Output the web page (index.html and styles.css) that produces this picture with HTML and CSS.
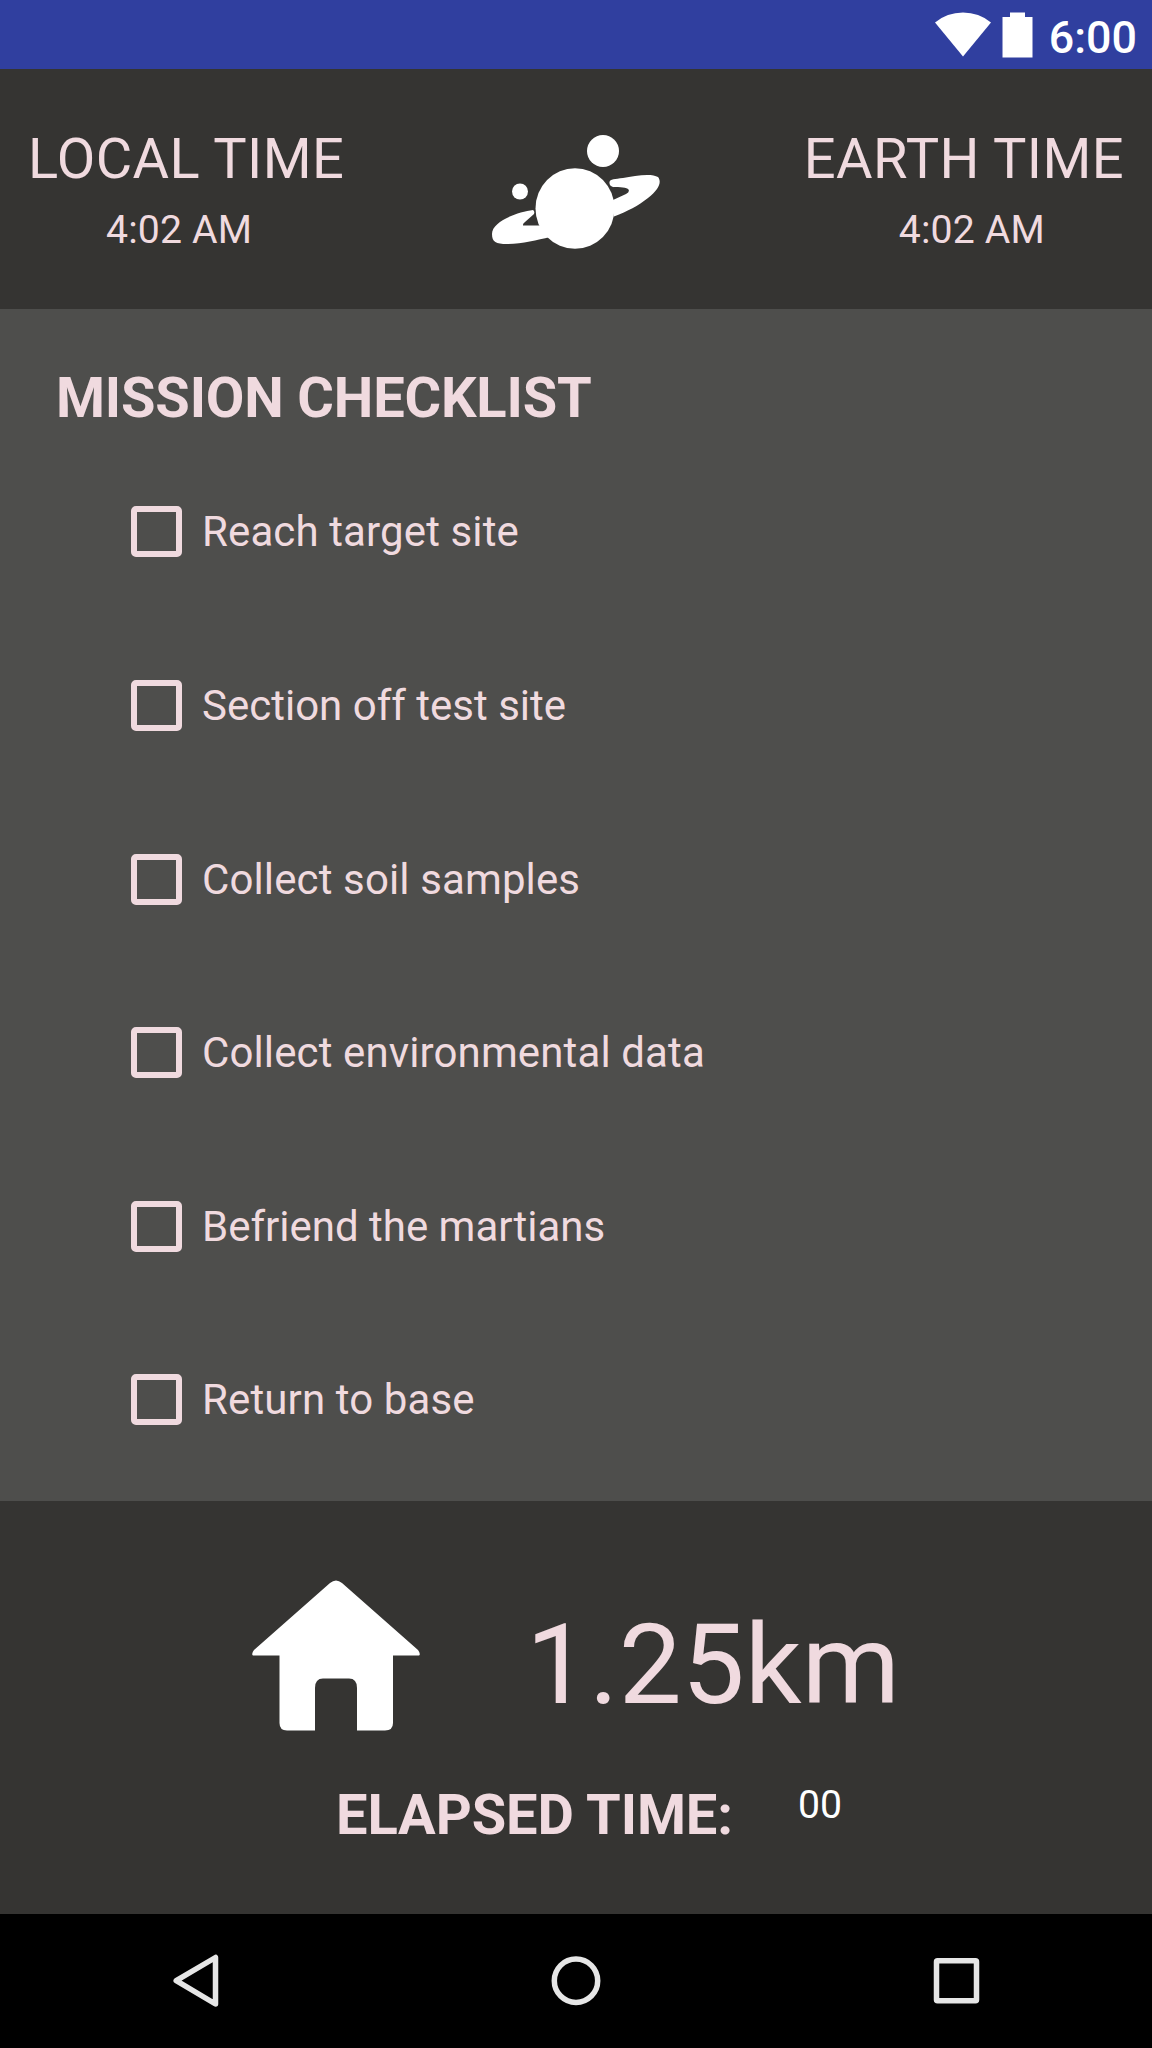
FILE: index.html
```html
<!DOCTYPE html>
<html lang="en">
<head>
<meta charset="utf-8">
<title>Mission Checklist</title>
<link rel="stylesheet" href="styles.css">
</head>
<body>
<div class="screen">
  <div class="status-bar">
    <svg class="wifi" width="56" height="45" viewBox="0 0 56 45"><path d="M0 10.5Q12 .5 28 .5T56 10.5L28 44.5Z" fill="#fff"/></svg>
    <svg class="battery" width="31" height="46" viewBox="0 0 31 46"><path d="M8 .5H23V5H30.5V45.5H.5V5H8Z" fill="#fff"/></svg>
    <span class="clock">6:00</span>
  </div>
  <header class="header">
    <div class="time local">
      <div class="time-label">LOCAL TIME</div>
      <div class="time-value">4:02 AM</div>
    </div>
    <svg class="planet" width="168" height="120" viewBox="0 0 168 120" fill="#fff">
      <circle cx="111" cy="19" r="16"/>
      <circle cx="28" cy="59.5" r="8"/>
      <ellipse cx="83" cy="76.500" rx="39.500" ry="40.300"/>
      <path d="M41 78C26 80 0 89 0 102C0 110 4 112 15 112C30 112 45 108 58 105L50 93.500L31 93.500Q30.500 92 33 90L42 82Q43 79 41 78Z"/>
      <path d="M117.500 50C118 47 123 47 131 46C143 43.500 160 41 166 45C170 50 167 57 156 66C146 74 136 79 122 84.500L121 68L134 62Q138 60 136.500 57.500C135 55 128 55.500 121 55Q117 54 117.500 50Z"/>
    </svg>
    <div class="time earth">
      <div class="time-label">EARTH TIME</div>
      <div class="time-value">4:02 AM</div>
    </div>
  </header>
  <main class="checklist">
    <h1 class="heading">MISSION CHECKLIST</h1>
    <ul class="items">
      <li class="item"><span class="box"></span>Reach target site</li>
      <li class="item ligatures"><span class="box"></span>Section off test site</li>
      <li class="item"><span class="box"></span>Collect soil samples</li>
      <li class="item"><span class="box"></span>Collect environmental data</li>
      <li class="item ligatures"><span class="box"></span>Befriend the martians</li>
      <li class="item"><span class="box"></span>Return to base</li>
    </ul>
  </main>
  <footer class="summary">
    <div class="distance-row">
      <svg class="house" width="168" height="168" viewBox="0 0 168 168"><path d="M78 12Q84 7 90 12L166 79Q169 83 167 84.500H141V152Q141 159.500 133 159.500H105V117Q105 107.500 97 107.500H71Q63 107.500 63 117V159.500H35Q27.500 159.500 27.500 152V84.500H1Q-1 83 2 79Z" fill="#fff"/></svg>
      <span class="distance">1.25km</span>
    </div>
    <div class="elapsed-row">
      <span class="heading">ELAPSED TIME:</span>
      <span class="elapsed">00</span>
    </div>
  </footer>
  <nav class="nav-bar">
    <svg width="60" height="60" viewBox="0 0 60 60"><path d="M50.500 6.500V53L11.200 29.700Z"/></svg>
    <svg width="60" height="60" viewBox="0 0 60 60"><circle cx="30" cy="29.700" r="21.700"/></svg>
    <svg width="60" height="60" viewBox="0 0 60 60"><rect x="9.500" y="9.700" width="40" height="40" rx="1"/></svg>
  </nav>
</div>
</body>
</html>
```
FILE: styles.css
```css
* {
  box-sizing: border-box;
}

body {
  margin: 0;
  background: #000;
}

.screen {
  display: flex;
  flex-direction: column;
  width: 1152px;
  height: 2048px;
  font-family: Roboto, sans-serif;
  color: #f0dadf;
  overflow: hidden;
}

.status-bar {
  display: flex;
  justify-content: flex-end;
  align-items: flex-start;
  height: 69px;
  padding: 12px 15px 0 0;
  background: #303f9f;
}

.battery {
  margin: 0 16px 0 11px;
}

.clock {
  font-size: 44.8px;
  font-weight: 500;
  line-height: 52px;
  color: #fff;
}

.header {
  display: flex;
  justify-content: space-between;
  height: 240px;
  padding: 57px 28px 0;
  background: #353432;
}

.time-label {
  font-size: 56px;
  line-height: 66px;
  letter-spacing: 0.4px;
}

.time-value {
  margin-top: 15px;
  padding-left: 78px;
  font-size: 39.2px;
  line-height: 46px;
  letter-spacing: 0.15px;
}

.earth .time-value {
  padding-left: 95px;
}

.planet {
  margin: 6px 0 0 3px;
}

.checklist {
  height: 1192px;
  padding: 56px 56px 0;
  background: #4e4e4c;
}

.heading {
  margin: 0;
  font-size: 56px;
  font-weight: 700;
  line-height: 66px;
  letter-spacing: -0.18px;
}

.items {
  margin: 14.2px 0 0;
  padding: 0 0 0 75px;
  list-style: none;
}

.item {
  display: flex;
  align-items: center;
  gap: 20px;
  height: 173.6px;
  font-size: 42px;
  letter-spacing: 0.12px;
}

.ligatures {
  letter-spacing: normal;
}

.box {
  width: 51px;
  height: 51px;
  border: 6px solid #f0dadf;
  border-radius: 5px;
}

.summary {
  height: 413px;
  padding-top: 70px;
  background: #353432;
}

.distance-row {
  display: flex;
  gap: 106px;
  height: 168px;
  padding-left: 252px;
}

.distance {
  margin-top: 28px;
  font-size: 112px;
  line-height: 131px;
  letter-spacing: 0.1px;
}

.elapsed-row {
  display: flex;
  gap: 65px;
  margin-top: 43px;
  padding-left: 336px;
}

.elapsed {
  font-size: 39.2px;
  line-height: 46px;
  color: #fff;
}

.elapsed-row .heading {
  letter-spacing: -0.1px;
}

.nav-bar {
  display: flex;
  flex: 1;
  justify-content: space-between;
  align-items: center;
  padding: 0 165px;
}

.nav-bar svg {
  fill: none;
  stroke: #e6e6e6;
  stroke-width: 5.5px;
  stroke-linejoin: round;
}
```
